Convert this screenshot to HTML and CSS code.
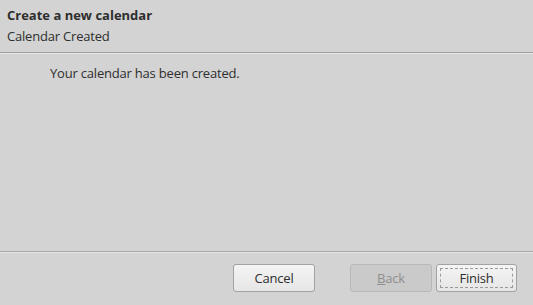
FILE: index.html
```html
<!DOCTYPE html>
<html lang="en">

<head>
    <meta charset="UTF-8">
    <meta name="viewport" content="width=device-width, initial-scale=1.0">
    <title>Create a new calendar</title>
    <link rel="stylesheet" href="styles.css">
</head>

<body>
    <div class="wizard">
        <div class="header">
            <div class="title">Create a new calendar</div>
            <div class="subtitle">Calendar Created</div>
        </div>
        <div class="content">
            <p>Your calendar has been created.</p>
        </div>
        <div class="buttons">
            <button class="btn">Cancel</button>
            <div class="nav">
                <button class="btn" disabled><u>B</u>ack</button>
                <button class="btn default"><span>Finish</span></button>
            </div>
        </div>
    </div>
</body>

</html>
```

FILE: styles.css
```css
* {
    margin: 0;
    padding: 0;
    box-sizing: border-box;
}

html,
body {
    height: 100%;
}

body {
    background: #d3d3d3;
    font-family: "Open Sans", "Noto Sans", sans-serif;
    font-size: 13px;
    letter-spacing: -0.2px;
    color: #2e2e2e;
}

.wizard {
    display: flex;
    flex-direction: column;
    height: 100%;
}

.header {
    padding: 5px 7px 0;
    height: 53px;
    border-bottom: 1px solid #a0a0a0;
    box-shadow: 0 1px 0 #e4e4e4;
}

.title {
    font-weight: bold;
    letter-spacing: 0;
    line-height: 20px;
}

.subtitle {
    margin-top: 1px;
    line-height: 20px;
}

.content {
    flex: 1;
    padding: 11px 50px;
    border-bottom: 1px solid #a8a8a8;
    box-shadow: 0 1px 0 #e4e4e4;
}

.buttons {
    height: 53px;
    display: flex;
    align-items: center;
    justify-content: flex-end;
    gap: 35px;
    padding: 0 16px 1px 0;
}

.nav {
    display: flex;
    gap: 4px;
}

.btn {
    width: 82px;
    height: 28px;
    font: inherit;
    letter-spacing: inherit;
    color: #2e2e2e;
    background: linear-gradient(#f4f4f4, #e6e6e6);
    border: 1px solid #a2a2a2;
    border-radius: 3px;
}

.btn:disabled {
    background: #cacaca;
    border-color: #b8b8b8;
    color: #8e8e8e;
}

.btn.default {
    width: 81px;
    padding: 3px;
}

.btn.default span {
    display: block;
    height: 100%;
    line-height: 18px;
    border: 1px dashed #9a9a9a;
}
```
